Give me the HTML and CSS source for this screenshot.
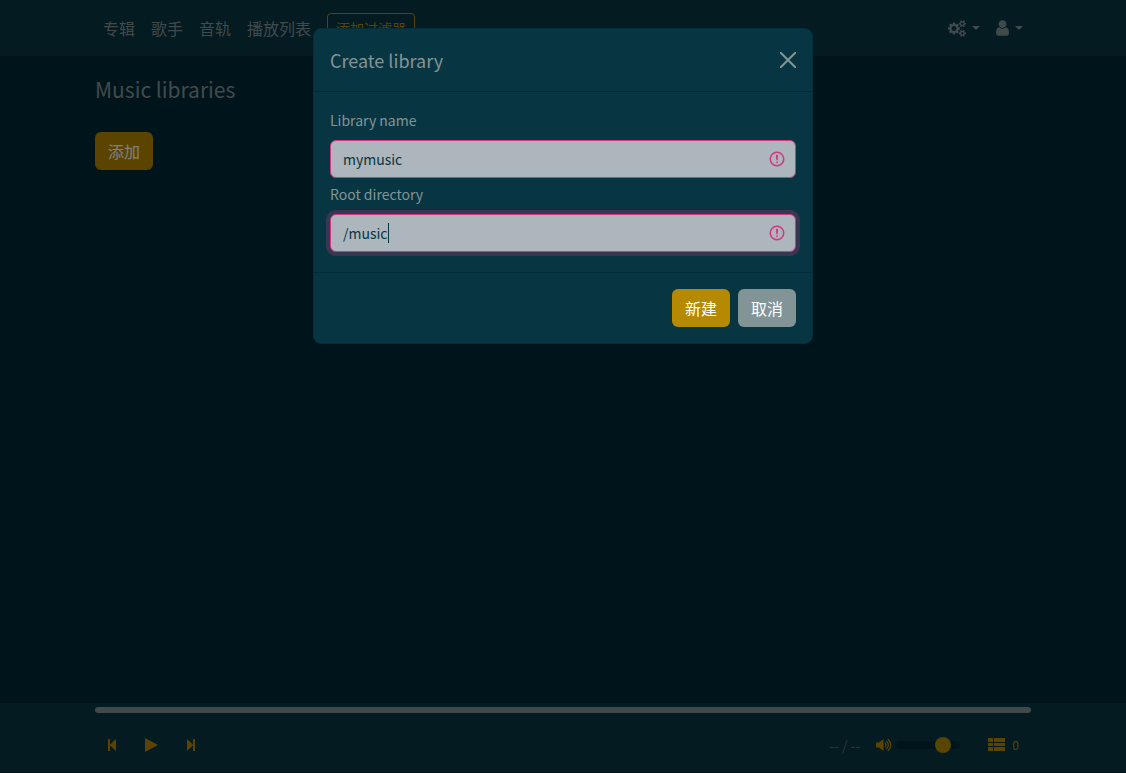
FILE: index.html
```
<!DOCTYPE html>
<html lang="zh-CN">

<head>
    <meta charset="utf-8">
    <meta name="viewport" content="width=device-width, initial-scale=1">
    <title>Music libraries</title>
    <link rel="stylesheet" href="styles.css">
</head>

<body>

    <header class="navbar">
        <nav class="container nav">
            <a class="nav-link" href="#">专辑</a>
            <a class="nav-link" href="#">歌手</a>
            <a class="nav-link" href="#">音轨</a>
            <a class="nav-link" href="#">播放列表</a>
            <button type="button" class="btn-filter">添加过滤器</button>
            <div class="nav-right">
                <button type="button" class="nav-toggle" aria-label="Settings">
                    <svg class="icon-cogs" viewBox="0 0 1920 1792"><path d="M896 896q0-106-75-181t-181-75-181 75-75 181 75 181 181 75 181-75 75-181zm768 512q0-52-38-90t-90-38-90 38-38 90q0 53 37.5 90.5t90.5 37.5 90.5-37.5 37.5-90.5zm0-1024q0-52-38-90t-90-38-90 38-38 90q0 53 37.5 90.5t90.5 37.5 90.5-37.5 37.5-90.5zm-384 421v185q0 10-7 19.5t-16 10.5l-155 24q-11 35-32 76 34 48 90 115 7 11 7 20 0 12-7 19-23 30-82.5 89.5t-78.5 59.5q-11 0-21-7l-115-90q-37 19-77 31-11 108-23 155-7 24-30 24h-186q-11 0-20-7.5t-10-17.5l-23-153q-34-10-75-31l-118 89q-7 7-20 7-11 0-21-8-144-133-144-160 0-9 7-19 10-14 41-53t47-61q-23-44-35-82l-152-24q-10-1-17-9.5t-7-19.5v-185q0-10 7-19.5t16-10.5l155-24q11-35 32-76-34-48-90-115-7-11-7-20 0-12 7-20 22-30 82-89t79-59q11 0 21 7l115 90q34-18 77-32 11-108 23-154 7-24 30-24h186q11 0 20 7.5t10 17.5l23 153q34 10 75 31l118-89q8-7 20-7 11 0 21 8 144 133 144 160 0 8-7 19-12 16-42 54t-45 60q23 48 34 82l152 23q10 2 17 10.5t7 19.5zm640 533v140q0 16-149 31-12 27-30 52 51 113 51 138 0 4-4 7-122 71-124 71-8 0-46-47t-52-68q-20 2-30 2t-30-2q-14 21-52 68t-46 47q-2 0-124-71-4-3-4-7 0-25 51-138-18-25-30-52-149-15-149-31v-140q0-16 149-31 13-29 30-52-51-113-51-138 0-4 4-7 4-2 35-20t59-34 30-16q8 0 46 46.5t52 67.5q20-2 30-2t30 2q51-71 92-112l6-2q4 0 124 70 4 3 4 7 0 25-51 138 17 23 30 52 149 15 149 31zm0-1024v140q0 16-149 31-12 27-30 52 51 113 51 138 0 4-4 7-122 71-124 71-8 0-46-47t-52-68q-20 2-30 2t-30-2q-14 21-52 68t-46 47q-2 0-124-71-4-3-4-7 0-25 51-138-18-25-30-52-149-15-149-31v-140q0-16 149-31 13-29 30-52-51-113-51-138 0-4 4-7 4-2 35-20t59-34 30-16q8 0 46 46.5t52 67.5q20-2 30-2t30 2q51-71 92-112l6-2q4 0 124 70 4 3 4 7 0 25-51 138 17 23 30 52 149 15 149 31z"/></svg>
                    <span class="caret"></span>
                </button>
                <button type="button" class="nav-toggle" aria-label="User">
                    <svg class="icon-user" viewBox="256 128 1280 1536"><path d="M1536 1399q0 109-62.5 187t-150.5 78h-854q-88 0-150.5-78t-62.5-187q0-85 8.5-160.5t31.5-152 58.5-131 94-89 134.5-34.5q131 128 313 128t313-128q76 0 134.5 34.5t94 89 58.5 131 31.5 152 8.5 160.5zm-256-887q0 159-112.5 271.5t-271.5 112.5-271.5-112.5-112.5-271.5 112.5-271.5 271.5-112.5 271.5 112.5 112.5 271.5z"/></svg>
                    <span class="caret"></span>
                </button>
            </div>
        </nav>
    </header>

    <main class="container content">
        <h1 class="page-title">Music libraries</h1>
        <button type="button" class="btn btn-primary">添加</button>
    </main>

    <footer class="player">
        <div class="container">
            <div class="seek"></div>
            <div class="controls">
                <button type="button" class="control" aria-label="Previous">
                    <svg class="icon-step" viewBox="0 0 10 12"><path d="M1 0h2v5.500L9 0v12L3 6.500V12H1z"/></svg>
                </button>
                <button type="button" class="control" aria-label="Play">
                    <svg class="icon-play" viewBox="0 0 13 14"><path d="M0 0l13 7-13 7z"/></svg>
                </button>
                <button type="button" class="control" aria-label="Next">
                    <svg class="icon-step" viewBox="0 0 10 12"><path d="M1 0l6 5.500V0h2v12H7V6.500L1 12z"/></svg>
                </button>
                <span class="time">-- / --</span>
                <button type="button" class="mute" aria-label="Mute">
                    <svg class="icon-volume" viewBox="0 0 16 14"><path d="M0 4.500h3l4.500-3.500v12L3 9.500H0z"/><path class="wave" d="M9 5q2 2 0 4M10.300 3q4 4 0 8M11.800 1q6 6 0 12"/></svg>
                </button>
                <input type="range" class="volume" min="0" max="100" value="80" aria-label="Volume">
                <button type="button" class="queue" aria-label="Queue">
                    <svg class="icon-list" viewBox="0 0 17 13"><path d="M0 0h5v4H0zM6 0h11v4H6zM0 5h5v3H0zM6 5h11v3H6zM0 9h5v4H0zM6 9h11v4H6z"/></svg>
                    <span>0</span>
                </button>
            </div>
        </div>
    </footer>

    <div class="backdrop"></div>

    <div class="modal">
        <form class="dialog" role="dialog" aria-labelledby="dialog-title">
            <div class="dialog-header">
                <h2 class="dialog-title" id="dialog-title">Create library</h2>
                <button type="button" class="btn-close" aria-label="Close">
                    <svg class="icon-close" viewBox="0 0 16 16"><path d="M0 0l16 16M16 0L0 16"/></svg>
                </button>
            </div>
            <div class="dialog-body">
                <div class="field">
                    <label for="name">Library name</label>
                    <div class="field-box">
                        <input type="text" class="form-control" id="name" value="mymusic">
                        <svg class="icon-invalid" viewBox="0 0 12 12"><circle cx="6" cy="6" r="4.500"/><path d="M5.800 3.600h.4L6 6.500z"/><circle class="dot" cx="6" cy="8.200" r=".6"/></svg>
                    </div>
                </div>
                <div class="field">
                    <label for="root">Root directory</label>
                    <div class="field-box">
                        <input type="text" class="form-control focused" id="root" value="/music">
                        <span class="text-cursor"></span>
                        <svg class="icon-invalid" viewBox="0 0 12 12"><circle cx="6" cy="6" r="4.500"/><path d="M5.800 3.600h.4L6 6.500z"/><circle class="dot" cx="6" cy="8.200" r=".6"/></svg>
                    </div>
                </div>
            </div>
            <div class="dialog-footer">
                <button type="submit" class="btn btn-primary">新建</button>
                <button type="button" class="btn btn-secondary">取消</button>
            </div>
        </form>
    </div>

</body>

</html>
```
FILE: styles.css
```
* {
    box-sizing: border-box;
}

body {
    margin: 0;
    min-height: 100vh;
    display: flex;
    flex-direction: column;
    background: #002b36;
    color: #839496;
    font: 16px/24px "Noto Sans CJK SC", "Noto Sans", sans-serif;
}

button,
input {
    font: inherit;
}

button {
    padding: 0;
    border: 0;
    background: none;
    color: inherit;
    cursor: pointer;
}

svg {
    display: block;
    fill: currentColor;
}

.container {
    width: 100%;
    max-width: 960px;
    margin: 0 auto;
    padding: 0 12px;
}

/* top bar */
.navbar {
    padding: 8px 0;
    background: #073642;
}

.nav {
    display: flex;
    align-items: center;
}

.nav-link {
    padding: 8px;
    color: inherit;
    text-decoration: none;
}

.btn-filter {
    margin-left: 8px;
    padding: 4px 8px;
    border: 1px solid #b58900;
    border-radius: 4px;
    color: #b58900;
    font-size: 14px;
    line-height: 21px;
}

.nav-right {
    display: flex;
    margin-left: auto;
}

.nav-toggle {
    display: flex;
    align-items: center;
    gap: 6px;
    padding: 8px;
}

.icon-cogs {
    width: 18px;
    height: 17px;
}

.icon-user {
    width: 13px;
    height: 16px;
}

.caret {
    border: 4px solid transparent;
    border-top-color: currentColor;
    border-bottom: 0;
}

/* page */
.content {
    flex: 1;
    padding-top: 16px;
}

.page-title {
    margin: 0 0 26px;
    font-size: 21px;
    font-weight: 400;
    line-height: 34px;
}

.btn {
    padding: 6px 12px;
    border: 1px solid transparent;
    border-radius: 6px;
    color: #fff;
}

.btn-primary {
    background: #b58900;
}

.btn-secondary {
    background: #839496;
}

/* player */
.player {
    padding: 4px 0 8px;
    border-bottom: 1px solid #002b36;
    background: #073642;
}

.seek {
    height: 6px;
    border-radius: 3px;
    background: #839496;
}

.controls {
    display: flex;
    align-items: center;
    gap: 4px;
    margin-top: 12px;
    color: #b58900;
}

.control {
    height: 39px;
    padding: 0 12px;
}

.icon-step {
    width: 10px;
    height: 12px;
}

.icon-play {
    width: 13px;
    height: 14px;
}

.time {
    margin-left: auto;
    color: #586e75;
    font-size: 14px;
}

.mute {
    margin-left: 12px;
}

.icon-volume {
    width: 16px;
    height: 14px;
}

.wave {
    fill: none;
    stroke: currentColor;
    stroke-width: 1.2;
}

.volume {
    -webkit-appearance: none;
    appearance: none;
    width: 64px;
    height: 16px;
    margin: 0;
    background: none;
}

.volume::-webkit-slider-runnable-track {
    height: 8px;
    border-radius: 4px;
    background: #002b36;
}

.volume::-webkit-slider-thumb {
    -webkit-appearance: none;
    width: 16px;
    height: 16px;
    margin-top: -4px;
    border-radius: 50%;
    background: #b58900;
}

.queue {
    display: flex;
    align-items: center;
    gap: 7px;
    margin-left: 24px;
    padding-right: 12px;
    font-size: 12px;
}

.icon-list {
    width: 17px;
    height: 13px;
}

/* modal */
.backdrop {
    position: fixed;
    inset: 0;
    background: rgba(0, 0, 0, 0.5);
}

.modal {
    position: fixed;
    inset: 0;
    padding: 28px 16px;
    overflow: auto;
}

.dialog {
    max-width: 500px;
    margin: 0 auto;
    border: 1px solid #042e39;
    border-radius: 8px;
    background: #073642;
}

.dialog-header {
    display: flex;
    align-items: center;
    justify-content: space-between;
    padding: 16px;
    border-bottom: 1px solid #002b36;
}

.dialog-title {
    margin: 0;
    font-size: 18px;
    font-weight: 400;
    line-height: 30px;
}

.icon-close {
    width: 16px;
    height: 16px;
    fill: none;
    stroke: currentColor;
    stroke-width: 2;
}

.dialog-body {
    padding: 16px;
}

.field {
    margin-bottom: 4px;
}

.field label {
    display: block;
    margin-bottom: 8px;
    font-size: 14px;
}

.field-box {
    position: relative;
}

.form-control {
    display: block;
    width: 100%;
    height: 38px;
    padding: 6px 36px 6px 12px;
    border: 1px solid #d33682;
    border-radius: 6px;
    outline: 0;
    background: #adb5bd;
    color: #073642;
    font-size: 14px;
}

.focused {
    box-shadow: 0 0 0 4px rgba(211, 54, 130, 0.25);
}

.text-cursor {
    position: absolute;
    top: 9px;
    left: 58px;
    width: 1px;
    height: 20px;
    background: #073642;
}

.icon-invalid {
    position: absolute;
    top: 10px;
    right: 10px;
    width: 18px;
    height: 18px;
    fill: none;
    stroke: #d33682;
    stroke-linejoin: round;
}

.dot {
    fill: #d33682;
    stroke: none;
}

.dialog-footer {
    display: flex;
    justify-content: flex-end;
    gap: 8px;
    padding: 16px;
    border-top: 1px solid #002b36;
}
```
